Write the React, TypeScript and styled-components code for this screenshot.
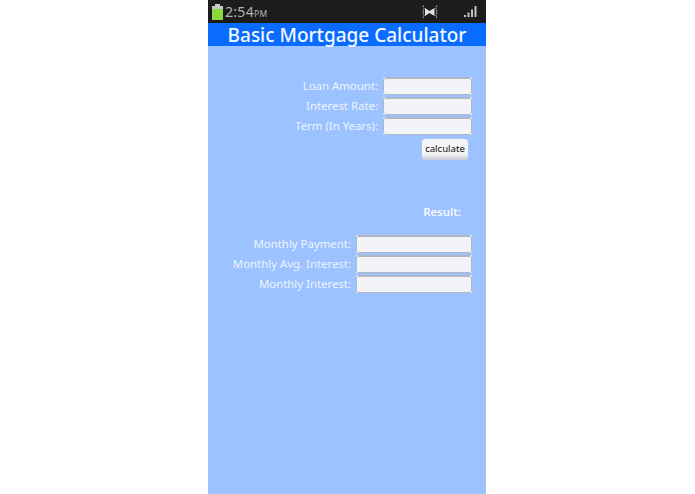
import React from 'react'
import styled, { createGlobalStyle } from 'styled-components'

const GlobalStyle = createGlobalStyle`
  html, body {
    margin: 0;
    padding: 0;
    background: #ffffff;
  }
  body {
    font-family: "Noto Sans", "Open Sans", sans-serif;
  }
`

const topFields = ['Loan Amount:', 'Interest Rate:', 'Term (In Years):']
const resultFields = ['Monthly Payment:', 'Monthly Avg. Interest:', 'Monthly Interest:']

/*---> Component <---*/
export default function App() {
  return (
    <>
      <GlobalStyle />
      <Page>
        <Phone>
          <StatusBar>
            <StatusLeft>
              <BatteryIcon />
              <Clock>
                2:54<ClockSuffix>PM</ClockSuffix>
              </Clock>
            </StatusLeft>
            <StatusRight>
              <MuteIcon />
              <SignalIcon />
            </StatusRight>
          </StatusBar>
          <Header>Basic Mortgage Calculator</Header>
          <Content>
            <FieldGroup>
              {topFields.map((label) => (
                <FieldRow key={label}>
                  <FieldLabel>{label}</FieldLabel>
                  <FieldInput $width={89} />
                </FieldRow>
              ))}
            </FieldGroup>
            <ButtonRow>
              <CalculateButton>calculate</CalculateButton>
            </ButtonRow>
            <ResultTitle>Result:</ResultTitle>
            <FieldGroup>
              {resultFields.map((label) => (
                <FieldRow key={label}>
                  <FieldLabel>{label}</FieldLabel>
                  <FieldInput $width={116} />
                </FieldRow>
              ))}
            </FieldGroup>
          </Content>
        </Phone>
      </Page>
    </>
  )
}

function BatteryIcon() {
  return (
    <svg width="11" height="16" viewBox="0 0 11 16">
      <rect x="3" y="0" width="5" height="2" fill="#c9c9c9" />
      <rect x="0" y="2" width="11" height="4" fill="#c6c9c0" />
      <rect x="0" y="5" width="11" height="11" fill="#8fd93f" />
    </svg>
  )
}

function MuteIcon() {
  return (
    <svg width="16" height="14" viewBox="0 0 16 14">
      <path d="M3 3 L7.5 6 L12.5 3 L12.5 11 L7.5 8 L3 11 Z" fill="#e2e2e2" />
      <path d="M1 0.5 L2 3.5 L1 7 L2 10.5 L1 13.5 M15 0.5 L14 3.5 L15 7 L14 10.5 L15 13.5" fill="none" stroke="#a8a8a8" strokeWidth="1.2" strokeDasharray="1.5 0.8" />
    </svg>
  )
}

function SignalIcon() {
  return (
    <svg width="13" height="11" viewBox="0 0 13 11">
      <rect x="0" y="9" width="2" height="2" fill="#c4c4c4" />
      <rect x="3.5" y="6.5" width="2" height="4.5" fill="#c4c4c4" />
      <rect x="7" y="3.5" width="2" height="7.5" fill="#c4c4c4" />
      <rect x="10.5" y="0" width="2" height="11" fill="#c4c4c4" />
    </svg>
  )
}

/*---> Styles <---*/

const Page = styled.div`
  display: flex;
  justify-content: center;
  width: 695px;
  height: 494px;
  overflow: hidden;
  padding-right: 1px;
  box-sizing: border-box;
`

const Phone = styled.div`
  display: flex;
  flex-direction: column;
  width: 278px;
  height: 494px;
  background-color: #9cc2ff;
`

const StatusBar = styled.div`
  display: flex;
  justify-content: space-between;
  align-items: center;
  height: 23px;
  padding: 0 9px 0 4px;
  background-color: #1c1c1c;
`

const StatusLeft = styled.div`
  display: flex;
  align-items: center;
  gap: 2px;
`

const StatusRight = styled.div`
  display: flex;
  align-items: center;
  gap: 26px;
`

const Clock = styled.span`
  font-size: 14px;
  letter-spacing: 0.3px;
  color: #b4b4b4;
`

const ClockSuffix = styled.span`
  font-size: 8.5px;
`

const Header = styled.div`
  height: 23px;
  line-height: 25px;
  background-color: #0a6cff;
  color: #f4f8ff;
  font-size: 19px;
  font-weight: 500;
  text-align: center;
  white-space: nowrap;
`

const Content = styled.div`
  display: flex;
  flex-direction: column;
  padding: 31px 14px 0 0;
`

const FieldGroup = styled.div`
  display: flex;
  flex-direction: column;
  gap: 2px;
`

const FieldRow = styled.div`
  display: flex;
  justify-content: flex-end;
  align-items: center;
  gap: 5px;
  height: 18px;
`

const FieldLabel = styled.span`
  margin-bottom: 2px;
  font-size: 11.4px;
  color: #eef4ff;
  white-space: nowrap;
`

const FieldInput = styled.div<{ $width: number }>`
  position: relative;
  box-sizing: border-box;
  width: ${(p) => p.$width}px;
  height: 18px;
  background-color: #f3f4f7;
  border: 1px solid #b3b8c4;
  border-top-width: 2px;
  border-radius: 3px;

  &::before {
    content: '';
    position: absolute;
    inset: -2px -1px -1px -1px;
    background:
      linear-gradient(#d8dde8, #d8dde8) left top / 2px 2px no-repeat,
      linear-gradient(#d8dde8, #d8dde8) right top / 2px 2px no-repeat,
      linear-gradient(#d8dde8, #d8dde8) left bottom / 2px 2px no-repeat,
      linear-gradient(#d8dde8, #d8dde8) right bottom / 2px 2px no-repeat;
  }
`

const ButtonRow = styled.div`
  display: flex;
  justify-content: flex-end;
  margin-top: 4px;
  padding-right: 4px;
`

const CalculateButton = styled.div`
  box-sizing: border-box;
  width: 46px;
  height: 21px;
  line-height: 20px;
  border-radius: 4px;
  background: linear-gradient(#f5f5f5 70%, #c8ccd3);
  box-shadow: 0 0 1px #dfe6f5;
  color: #111111;
  font-size: 9.6px;
  text-align: center;
`

const ResultTitle = styled.div`
  margin: 43px 11px 15px 0;
  height: 17px;
  line-height: 17px;
  color: #f4f8ff;
  font-size: 11.4px;
  font-weight: 600;
  text-align: right;
`
